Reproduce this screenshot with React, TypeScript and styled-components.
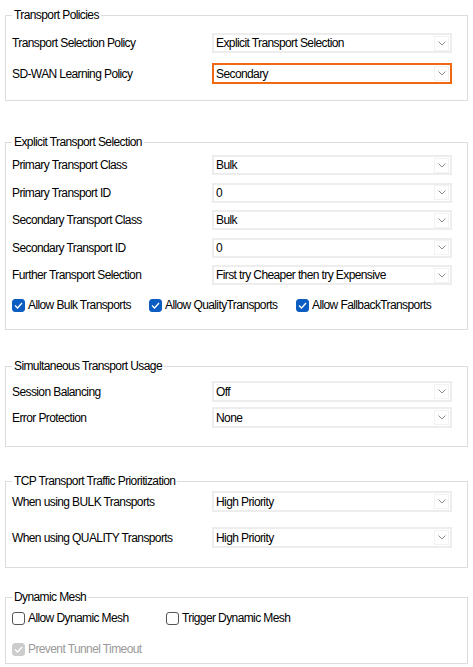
import React from 'react';
import styled, { createGlobalStyle } from 'styled-components';

const GlobalStyle = createGlobalStyle`
  html, body {
    margin: 0;
    padding: 0;
    background: #ffffff;
  }
  body {
    font-family: "Liberation Sans", Arial, sans-serif;
    font-size: 12px;
    letter-spacing: -0.6px;
    color: #000000;
  }
`;

const Page = styled.div`
  width: 473px;
  padding-top: 8px;
  display: flex;
  flex-direction: column;
`;

const Group = styled.fieldset<{ $top: number; $pt: number; $pb: number; $gap: number }>`
  margin: ${({ $top }) => $top}px 5px 0 5px;
  padding: ${({ $pt }) => $pt}px 15px ${({ $pb }) => $pb}px 6px;
  border: 1px solid #dcdcdc;
  min-width: 0;
  display: flex;
  flex-direction: column;
  gap: ${({ $gap }) => $gap}px;
`;

const Legend = styled.legend`
  margin-left: 0;
  padding: 0 2px;
  line-height: 14px;
  height: 14px;
`;

const Row = styled.div<{ $h: number }>`
  display: grid;
  grid-template-columns: 200px 240px;
  align-items: center;
  height: ${({ $h }) => $h}px;
`;

const Label = styled.span`
  line-height: 14px;
  white-space: nowrap;
`;

const Select = styled.div<{ $focused?: boolean }>`
  box-sizing: border-box;
  height: 100%;
  border: 2px solid ${({ $focused }) => ($focused ? '#f0690f' : '#ededed')};
  background: #ffffff;
  display: flex;
  align-items: center;
  padding: 0 1px 0 2px;
`;

const SelectText = styled.span`
  flex: 1;
  white-space: nowrap;
  line-height: 14px;
`;

const DropButton = styled.span`
  box-sizing: border-box;
  width: 15px;
  height: 15px;
  border: 1px solid #f2f2f2;
  display: flex;
  align-items: center;
  justify-content: center;
`;

const CheckRow = styled.div<{ $cols: string }>`
  display: grid;
  grid-template-columns: ${({ $cols }) => $cols};
  align-items: center;
  height: 14px;
`;

const CheckItem = styled.label<{ $disabled?: boolean }>`
  display: flex;
  align-items: center;
  gap: 3px;
  white-space: nowrap;
  color: ${({ $disabled }) => ($disabled ? '#9a9a9a' : '#000000')};
`;

const Box = styled.span<{ $checked?: boolean; $disabled?: boolean }>`
  box-sizing: border-box;
  width: 13px;
  height: 13px;
  border-radius: 3px;
  display: flex;
  align-items: center;
  justify-content: center;
  background: ${({ $checked, $disabled }) =>
    $disabled ? '#cccccc' : $checked ? '#0b5dc2' : '#ffffff'};
  border: 1px solid
    ${({ $checked, $disabled }) =>
      $disabled ? '#cccccc' : $checked ? '#0b5dc2' : '#555555'};
`;

const Chevron = () => (
  <svg width="8" height="5" viewBox="0 0 8 5">
    <path d="M0.5 0.5 L4 4 L7.5 0.5" fill="none" stroke="#8c8c8c" strokeWidth="1" />
  </svg>
);

const Tick = () => (
  <svg width="9" height="7" viewBox="0 0 9 7">
    <path d="M1 3.5 L3.5 6 L8 1" fill="none" stroke="#ffffff" strokeWidth="1.3" />
  </svg>
);

const Dropdown: React.FC<{ value: string; focused?: boolean }> = ({ value, focused }) => (
  <Select $focused={focused}>
    <SelectText>{value}</SelectText>
    <DropButton>
      <Chevron />
    </DropButton>
  </Select>
);

const Field: React.FC<{ label: string; value: string; h?: number; focused?: boolean }> = ({
  label,
  value,
  h = 20,
  focused,
}) => (
  <Row $h={h}>
    <Label>{label}</Label>
    <Dropdown value={value} focused={focused} />
  </Row>
);

const Check: React.FC<{ label: string; checked?: boolean; disabled?: boolean }> = ({
  label,
  checked,
  disabled,
}) => (
  <CheckItem $disabled={disabled}>
    <Box $checked={checked} $disabled={disabled}>
      {checked && <Tick />}
    </Box>
    {label}
  </CheckItem>
);

export default function App() {
  return (
    <>
      <GlobalStyle />
      <Page>
        <Group $top={0} $pt={11} $pb={16} $gap={10}>
          <Legend>Transport Policies</Legend>
          <Field label="Transport Selection Policy" value="Explicit Transport Selection" />
          <Field label="SD-WAN Learning Policy" value="Secondary" h={21} focused />
        </Group>

        <Group $top={34} $pt={6} $pb={17} $gap={7.5}>
          <Legend>Explicit Transport Selection</Legend>
          <Field label="Primary Transport Class" value="Bulk" />
          <Field label="Primary Transport ID" value="0" />
          <Field label="Secondary Transport Class" value="Bulk" />
          <Field label="Secondary Transport ID" value="0" />
          <Field label="Further Transport Selection" value="First try Cheaper then try Expensive" />
          <CheckRow $cols="137px 147px auto" style={{ marginTop: 5.5 }}>
            <Check label="Allow Bulk Transports" checked />
            <Check label="Allow QualityTransports" checked />
            <Check label="Allow FallbackTransports" checked />
          </CheckRow>
        </Group>

        <Group $top={29} $pt={8} $pb={18} $gap={5}>
          <Legend>Simultaneous Transport Usage</Legend>
          <Field label="Session Balancing" value="Off" h={21} />
          <Field label="Error Protection" value="None" h={21} />
        </Group>

        <Group $top={27} $pt={3} $pb={19} $gap={15}>
          <Legend>TCP Transport Traffic Prioritization</Legend>
          <Field label="When using BULK Transports" value="High Priority" h={21} />
          <Field label="When using QUALITY Transports" value="High Priority" h={21} />
        </Group>

        <Group $top={22} $pt={7} $pb={7} $gap={17}>
          <Legend>Dynamic Mesh</Legend>
          <CheckRow $cols="154px auto">
            <Check label="Allow Dynamic Mesh" />
            <Check label="Trigger Dynamic Mesh" />
          </CheckRow>
          <CheckRow $cols="auto">
            <Check label="Prevent Tunnel Timeout" checked disabled />
          </CheckRow>
        </Group>
      </Page>
    </>
  );
}
